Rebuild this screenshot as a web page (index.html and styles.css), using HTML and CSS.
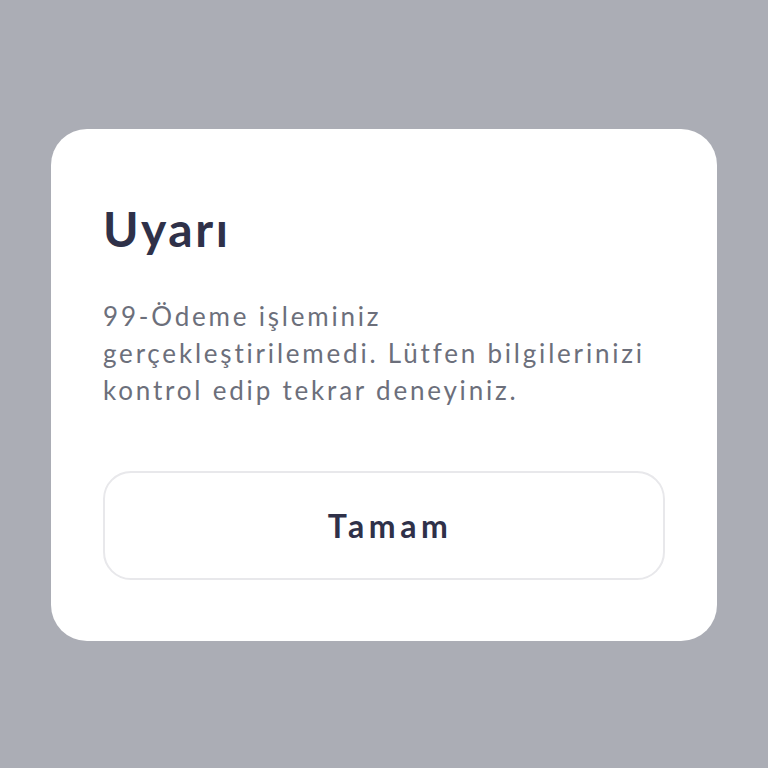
FILE: index.html
```html
<!DOCTYPE html>
<html lang="tr">
<head>
    <meta charset="UTF-8">
    <title>Uyarı</title>
    <link rel="stylesheet" href="styles.css">
</head>
<body>
    <div class="dialog">
        <h1 class="title">Uyarı</h1>
        <p class="message">99-Ödeme işleminiz<br>gerçekleştirilemedi. Lütfen bilgilerinizi<br>kontrol edip tekrar deneyiniz.</p>
        <button class="btn" type="button">Tamam</button>
    </div>
</body>
</html>
```

FILE: styles.css
```css
* {
    padding: 0;
    margin: 0;
    box-sizing: border-box;
}
body {
    background: #abadb5;
    font-family: Lato, "Noto Sans", sans-serif;
    padding-top: 129px;
}
.dialog {
    width: 666px;
    margin-left: 51px;
    background: #fff;
    border-radius: 36px;
    padding: 76px 52px 61px;
    display: flex;
    flex-direction: column;
}
.title {
    font-size: 48px;
    font-weight: 700;
    color: #2f3149;
    line-height: 48px;
    letter-spacing: 2.6px;
}
.message {
    font-size: 26px;
    color: #6c6f7b;
    line-height: 37px;
    letter-spacing: 2.8px;
    white-space: nowrap;
    margin-top: 45px;
}
.btn {
    margin-top: 62px;
    height: 109px;
    width: 100%;
    padding-left: 12px;
    background: #fff;
    border: 2px solid #e8e8eb;
    border-radius: 28px;
    font-family: inherit;
    font-size: 32px;
    font-weight: 700;
    letter-spacing: 4.6px;
    color: #2f3149;
    cursor: pointer;
}
```
